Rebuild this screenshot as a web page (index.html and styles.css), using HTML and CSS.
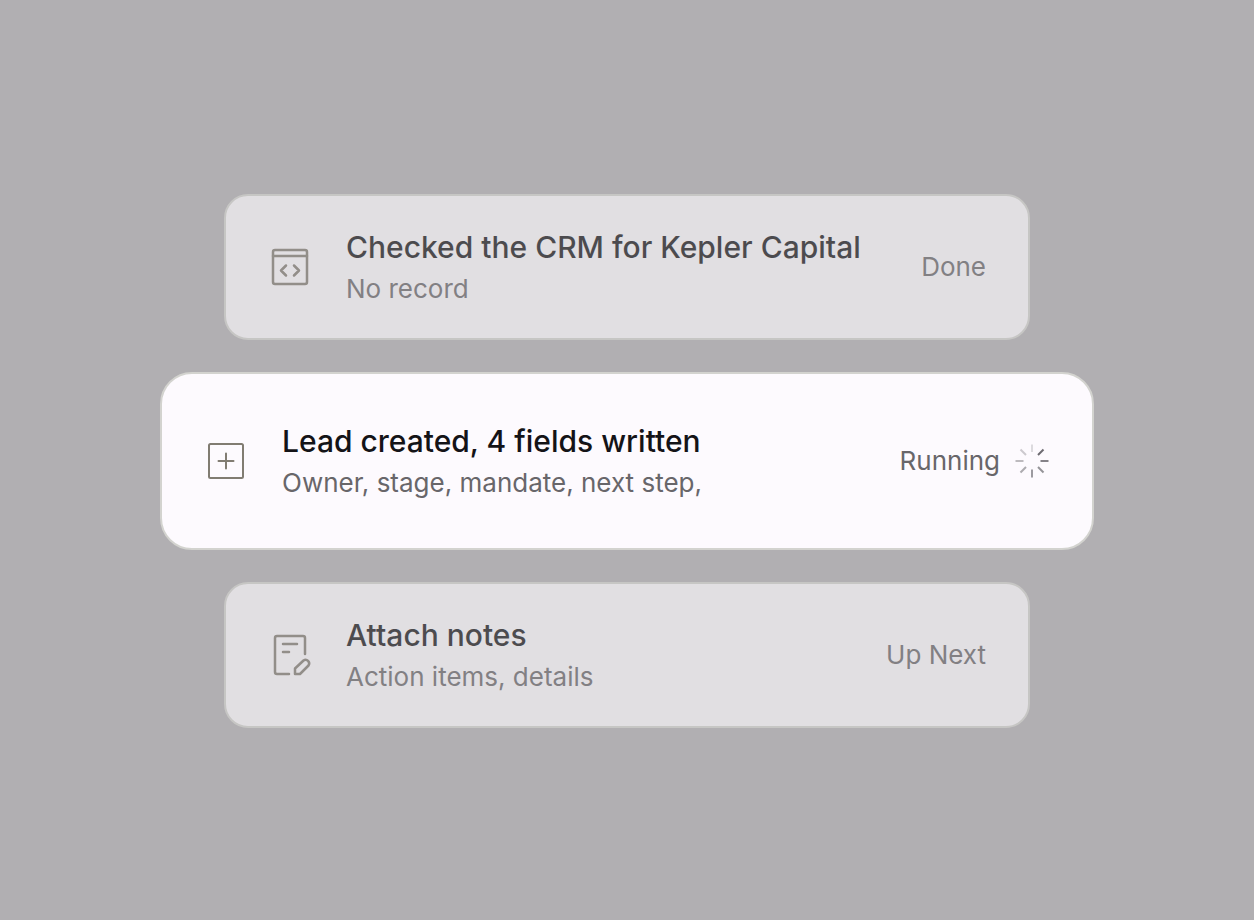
FILE: index.html
```html
<!DOCTYPE html>
<html lang="en">
<head>
    <meta charset="UTF-8">
    <meta name="viewport" content="width=device-width, initial-scale=1.0">
    <title>Agent Steps</title>
    <link rel="stylesheet" href="styles.css">
</head>
<body>
    <main class="steps">
        <!-- Done -->
        <section class="step">
            <svg class="icon" viewBox="0 0 48 48" aria-hidden="true">
                <rect x="7" y="7" width="34" height="34" rx="2"/>
                <path d="M7 13H41"/>
                <path d="M20 22.500L15 27.500L20 32.500M28 22.500L33 27.500L28 32.500"/>
            </svg>
            <div class="step-text">
                <h2>Checked the CRM for Kepler Capital</h2>
                <p>No record</p>
            </div>
            <div class="status">Done</div>
        </section>

        <!-- Running -->
        <section class="step active">
            <svg class="icon" viewBox="0 0 48 48" aria-hidden="true">
                <rect x="7" y="7" width="34" height="34" rx="1.500"/>
                <path d="M24 16.500V31.500M16.500 24H31.500"/>
            </svg>
            <div class="step-text">
                <h2>Lead created, 4 fields written</h2>
                <p>Owner, stage, mandate, next step,</p>
            </div>
            <div class="status">
                Running
                <svg class="spinner" viewBox="0 0 40 40" aria-hidden="true">
                    <path opacity="0.2" d="M20 3.500V11"/>
                    <path opacity="0.9" d="M26 14L31.500 8.500"/>
                    <path opacity="0.75" d="M28.500 20H36.500"/>
                    <path opacity="0.65" d="M26 26L31.500 31.500"/>
                    <path opacity="0.6" d="M20 28.500V36.500"/>
                    <path opacity="0.5" d="M14 26L8.500 31.500"/>
                    <path opacity="0.4" d="M3.500 20H11.500"/>
                    <path opacity="0.3" d="M14 14L8.500 8.500"/>
                </svg>
            </div>
        </section>

        <!-- Up next -->
        <section class="step">
            <svg class="icon" viewBox="0 0 48 48" aria-hidden="true">
                <path d="M23 43H11A2 2 0 0 1 9 41V7A2 2 0 0 1 11 5H37A2 2 0 0 1 39 7V23"/>
                <path d="M17 13H31M17 21H23"/>
                <path d="M29 43V37.500L37.500 29.500A3.600 3.600 0 0 1 42.500 34.500L34 43Z"/>
            </svg>
            <div class="step-text">
                <h2>Attach notes</h2>
                <p>Action items, details</p>
            </div>
            <div class="status">Up Next</div>
        </section>
    </main>
</body>
</html>
```
FILE: styles.css
```css
body {
    font-family: Inter, 'Liberation Sans', sans-serif;
    margin: 0;
    background-color: #b1afb2;
}

.steps {
    box-sizing: border-box;
    min-height: 100vh;
    max-width: 934px;
    margin: 0 auto;
    padding: 32px 0 30px;
    display: flex;
    flex-direction: column;
    justify-content: center;
    gap: 32px;
}

.step {
    display: flex;
    align-items: center;
    gap: 32px;
    margin: 0 64px;
    padding: 29px 42px 29px 40px;
    background-color: #fdfafe;
    border: 2px solid #d3d3cf;
    border-radius: 24px;
    opacity: 0.64;
}

.step.active {
    margin: 0;
    padding: 45px 40px;
    border-radius: 32px;
    opacity: 1;
}

.icon {
    width: 48px;
    height: 48px;
    flex: none;
    fill: none;
    stroke: #817c72;
    stroke-width: 2.5;
    stroke-linecap: round;
    stroke-linejoin: round;
}

.active .icon {
    stroke-width: 2;
}

.step-text {
    flex: 1;
}

h2 {
    margin: 0;
    font-size: 30px;
    font-weight: 450;
    line-height: 44px;
    color: #141317;
}

p {
    margin: 0;
    font-size: 26px;
    line-height: 40px;
    color: #68666a;
}

.status {
    display: flex;
    align-items: center;
    gap: 12px;
    font-size: 26px;
    line-height: 42px;
    color: #68666a;
}

.spinner {
    width: 40px;
    height: 40px;
    fill: none;
    stroke: #5c5a60;
    stroke-width: 2;
}
```
